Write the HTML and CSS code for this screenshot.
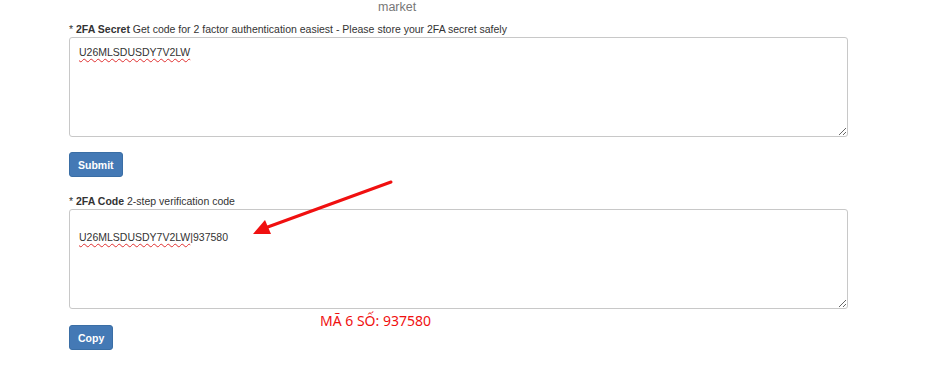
FILE: index.html
```html
<!DOCTYPE html>
<html lang="vi">
<head>
    <meta charset="UTF-8">
    <title>2FA</title>
    <link rel="stylesheet" href="styles.css">
</head>
<body>
    <div class="page">
        <div class="market">market</div>

        <div class="field">
            <label>* <b>2FA Secret</b> Get code for 2 factor authentication easiest - Please store your 2FA secret safely</label>
            <div class="box"><span class="spell">U26MLSDUSDY7V2LW</span></div>
        </div>
        <button class="btn">Submit</button>

        <div class="field second">
            <label>* <b>2FA Code</b> 2-step verification code</label>
            <div class="box"><br><span class="spell">U26MLSDUSDY7V2LW</span>|937580</div>
        </div>
        <button class="btn copy">Copy</button>

        <div class="note">MÃ 6 SỐ: 937580</div>
        <svg class="arrow" width="160" height="70" viewBox="0 0 160 70">
            <line x1="148" y1="4" x2="22" y2="50" stroke="#f01010" stroke-width="3" stroke-linecap="round"/>
            <polygon points="10,56 22,42 28,56" fill="#f01010"/>
        </svg>
    </div>
</body>
</html>
```

FILE: styles.css
```css
body {
    margin: 0;
    font-family: "Liberation Sans", Arial, sans-serif;
    font-size: 10.5px;
    color: #333;
    background: #fff;
}

.page {
    position: relative;
    padding-left: 69px;
    width: 779px;
}

.market {
    margin-top: -2px;
    padding-left: 309px;
    font-size: 12.5px;
    line-height: 18px;
    color: #777;
}

.field {
    margin-top: 6px;
}

.field label {
    display: block;
    line-height: 14px;
    margin-bottom: 1px;
}

.field.second {
    margin-top: 17px;
}

.box {
    box-sizing: border-box;
    width: 779px;
    height: 100px;
    border: 1px solid #c8c8c8;
    border-radius: 3px;
    padding: 8px 9px;
    line-height: 13px;
    overflow: auto;
    resize: both;
}

.spell {
    text-decoration: underline wavy #e03030;
    text-decoration-thickness: 1px;
    text-underline-offset: 2px;
}

.btn {
    display: block;
    margin-top: 15px;
    height: 25px;
    padding: 0 8px;
    border: 1px solid #3a6ea5;
    border-radius: 3px;
    background: #4479b5;
    color: #fff;
    font-family: "Liberation Sans", Arial, sans-serif;
    font-size: 10.5px;
    font-weight: bold;
}

.btn.copy {
    margin-top: 16px;
}

.note {
    position: absolute;
    left: 320px;
    top: 313px;
    font-family: "Noto Sans", "DejaVu Sans", sans-serif;
    font-size: 14px;
    color: #f01010;
}

.arrow {
    position: absolute;
    left: 243px;
    top: 180px;
}
```
